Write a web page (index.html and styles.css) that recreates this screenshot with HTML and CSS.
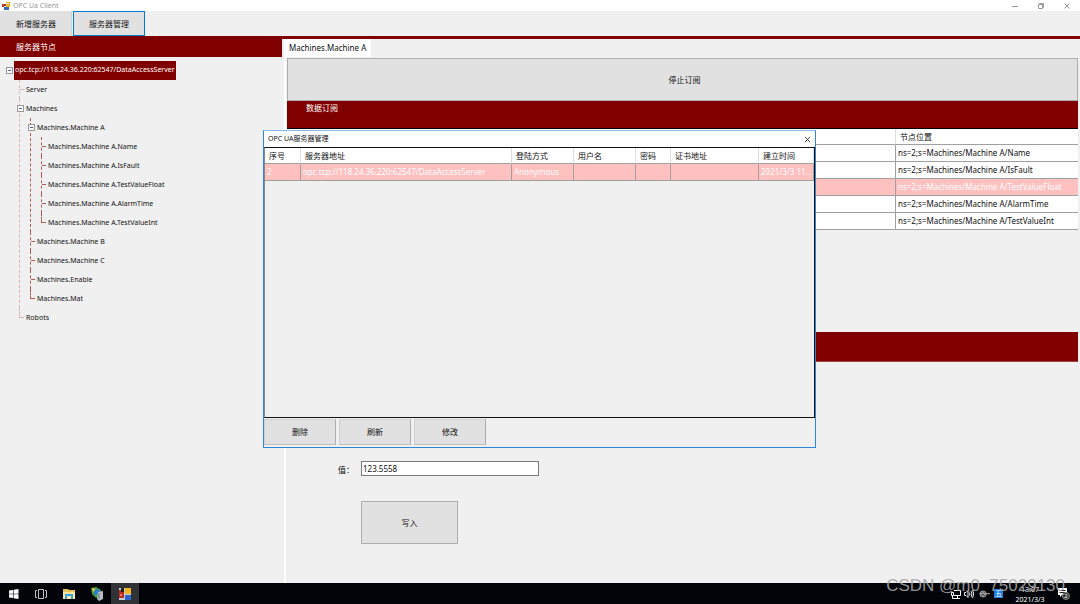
FILE: index.html
```html
<!DOCTYPE html>
<html lang="zh-CN">
<head>
<meta charset="utf-8">
<meta name="viewport" content="width=device-width, initial-scale=1">
<title>OPC Ua Client</title>
<link rel="stylesheet" href="styles.css">
</head>
<body>
<div class="desktop">
  <header class="titlebar">
    <svg class="app-icon" viewBox="0 0 8 8" aria-hidden="true"><path fill="#e9b62c" d="M4 0h4v5H4z"/><path fill="#b33a2a" d="M0 2h4v3H0z"/><path fill="#3b67c4" d="M2 5h5v3H2z"/><path fill="#e8e8e8" d="M4 1h3v1H4zM2 4h2v1H2z"/></svg>
    <span class="titlebar-text">OPC Ua Client</span>
    <div class="window-controls">
      <button class="window-button" type="button" aria-label="最小化"><svg viewBox="0 0 8 8"><path d="M1 4.500h6"/></svg></button>
      <button class="window-button" type="button" aria-label="还原"><svg viewBox="0 0 8 8"><path d="M1.500 2.500h4v4h-4zM2.500 2.500v-1h4v4h-1"/></svg></button>
      <button class="window-button" type="button" aria-label="关闭"><svg viewBox="0 0 8 8"><path d="M1.500 1.500l5 5M6.500 1.500l-5 5"/></svg></button>
    </div>
  </header>

  <nav class="toolbar">
    <button class="button toolbar-button" type="button">新增服务器</button>
    <button class="button toolbar-button focused" type="button">服务器管理</button>
  </nav>

  <div class="workspace">
    <aside class="sidebar">
      <h2 class="sidebar-title">服务器节点</h2>
      <ul class="tree">
        <li class="expandable"><span class="node selected">opc.tcp://118.24.36.220:62547/DataAccessServer</span>
          <ul>
            <li><span class="node">Server</span></li>
            <li class="expandable"><span class="node">Machines</span>
              <ul class="strong-lines">
                <li class="expandable"><span class="node">Machines.Machine A</span>
                  <ul>
                    <li><span class="node">Machines.Machine A.Name</span></li>
                    <li><span class="node">Machines.Machine A.IsFault</span></li>
                    <li><span class="node">Machines.Machine A.TestValueFloat</span></li>
                    <li><span class="node">Machines.Machine A.AlarmTime</span></li>
                    <li><span class="node">Machines.Machine A.TestValueInt</span></li>
                  </ul>
                </li>
                <li><span class="node">Machines.Machine B</span></li>
                <li><span class="node">Machines.Machine C</span></li>
                <li><span class="node">Machines.Enable</span></li>
                <li><span class="node">Machines.Mat</span></li>
              </ul>
            </li>
            <li><span class="node">Robots</span></li>
          </ul>
        </li>
      </ul>
    </aside>

    <main class="content">
      <div class="tabs"><button class="tab" type="button">Machines.Machine A</button></div>
      <div class="panel">
        <button class="button stop-button" type="button">停止订阅</button>
        <h2 class="band">数据订阅</h2>
        <table class="grid nodes">
          <colgroup><col><col class="col-path"></colgroup>
          <thead><tr><th></th><th>节点位置</th></tr></thead>
          <tbody>
            <tr><td></td><td>ns=2;s=Machines/Machine A/Name</td></tr>
            <tr><td></td><td>ns=2;s=Machines/Machine A/IsFault</td></tr>
            <tr class="active"><td></td><td>ns=2;s=Machines/Machine A/TestValueFloat</td></tr>
            <tr><td></td><td>ns=2;s=Machines/Machine A/AlarmTime</td></tr>
            <tr><td></td><td>ns=2;s=Machines/Machine A/TestValueInt</td></tr>
          </tbody>
        </table>
        <div class="band write-band"></div>
        <form class="write-form">
          <label class="write-label" for="value">值：</label>
          <input class="write-input" id="value" type="text" value="123.5558">
          <button class="button write-button" type="button">写入</button>
        </form>
      </div>
    </main>
  </div>

  <footer class="taskbar">
    <div class="tasks">
      <button class="task" type="button" aria-label="开始"><svg viewBox="0 0 14 14"><path fill="#fff" d="M2 3.500l4-.6v3.800H2zM6.600 2.800l4.900-.7v4.600H6.600zM2 7.300h4v3.800l-4-.6zM6.600 7.300h4.900v4.600l-4.900-.7z"/></svg></button>
      <button class="task" type="button" aria-label="任务视图"><svg viewBox="0 0 14 14"><path fill="none" stroke="#c4c4c4" d="M4.500 2.500h5v9h-5zM3 3.500H1.500v7H3M11 3.500h1.500v7H11"/></svg></button>
      <button class="task" type="button" aria-label="文件资源管理器"><svg viewBox="0 0 14 14"><path fill="#e8c05a" d="M1 2h5l1 1h6v9H1z"/><path fill="#fbe49b" d="M1 5h12v7H1z"/><path fill="#35a2dc" d="M3 7h8v5H9V9H5v3H3z"/></svg></button>
      <button class="task" type="button" aria-label="服务器管理器"><svg viewBox="0 0 14 14"><path fill="#3f9c4b" d="M1 1l5-1 5 3-1 6-4 2-4-4z"/><path fill="#edc83c" d="M2 1l4 1-3 3z"/><path fill="#2e7bd0" d="M5 2l5 1-1 4-5 1z"/><path fill="#b8bec4" d="M8 5l5-1v8l-4 2-2-2z"/><path stroke="#69727a" d="M9 6v6"/></svg></button>
      <button class="task running" type="button" aria-label="OPC Ua Client"><svg viewBox="0 0 14 14"><path fill="#c8ced6" d="M1 1h12v12H1z"/><path fill="#b92c24" d="M1 3h5v8H1z"/><path fill="#222" d="M3 1h3v4H3z"/><path fill="#f5b51e" d="M7 1h6v6H7z"/><path fill="#2b67c8" d="M7 8h6v5H7z"/><path fill="#e97a62" d="M2 7h2v2H2z"/></svg></button>
    </div>
    <div class="tray">
      <svg class="tray-icon" viewBox="0 0 10 10" aria-hidden="true"><path fill="none" stroke="#fff" d="M3 1.500h6.500v5H3M6.500 7v2M4 9.500h5M.5 3.500h2v3h-2zM1.500 7v2.500H4"/></svg>
      <svg class="tray-icon" viewBox="0 0 10 10" aria-hidden="true"><path fill="none" stroke="#e8e8e8" d="M.5 3.500H2l2-2v7l-2-2H.5zM5.500 3.500q1 1.500 0 3M7 2q2 3 0 6M8.500 1q2.500 4 0 8"/></svg>
      <svg class="tray-icon" viewBox="0 0 10 10" aria-hidden="true"><circle cx="6" cy="5" r="3.500" fill="#8b8b8b"/><path stroke="#222" d="M4.500 3.500l3 3M7.500 3.500l-3 3"/></svg>
      <span class="ime">五</span>
      <div class="clock"><time>13:07</time><time>2021/3/3</time></div>
      <svg class="notice" viewBox="0 0 13 13" aria-hidden="true"><path fill="#fff" d="M1 1h9v7H5L3 10V8H1z"/><path stroke="#222" d="M2.500 3.500h6M2.500 5.500h6"/><circle cx="9" cy="9" r="3.500" fill="#333" stroke="#888"/><text x="9" y="11" text-anchor="middle">2</text></svg>
    </div>
  </footer>

  <section class="dialog" role="dialog" aria-labelledby="dialog-title">
    <header class="dialog-header">
      <h1 class="dialog-title" id="dialog-title">OPC UA服务器管理</h1>
      <button class="dialog-close" type="button" aria-label="关闭"><svg viewBox="0 0 8 8"><path d="M1 1l6 6M7 1l-6 6"/></svg></button>
    </header>
    <div class="dialog-body">
      <table class="grid servers">
        <colgroup><col class="col-index"><col class="col-address"><col class="col-login"><col class="col-login"><col class="col-password"><col class="col-cert"><col></colgroup>
        <thead><tr><th>序号</th><th>服务器地址</th><th>登陆方式</th><th>用户名</th><th>密码</th><th>证书地址</th><th>建立时间</th></tr></thead>
        <tbody><tr class="active"><td>2</td><td>opc.tcp://118.24.36.220:62547/DataAccessServer</td><td>Anonymous</td><td></td><td></td><td></td><td>2021/3/3 11...</td></tr></tbody>
      </table>
    </div>
    <div class="dialog-actions">
      <button class="button dialog-button" type="button">删除</button>
      <button class="button dialog-button" type="button">刷新</button>
      <button class="button dialog-button" type="button">修改</button>
    </div>
  </section>

  <div class="watermark">CSDN @m0_75029130</div>
</div>
</body>
</html>
```
FILE: styles.css
```css
* {
  box-sizing: border-box;
}

body {
  margin: 0;
  background: #f0f0f0;
  color: #111;
  font: 8px/12px "Noto Sans", "Noto Sans CJK SC", sans-serif;
}

h1,
h2 {
  margin: 0;
  font-size: 8px;
  font-weight: 400;
}

button,
input {
  font: inherit;
  color: inherit;
}

button {
  padding: 0;
  border: 0;
  background: none;
}

ul {
  margin: 0;
  padding: 0;
  list-style: none;
}

svg {
  display: block;
}

.desktop {
  position: relative;
  display: flex;
  flex-direction: column;
  min-height: 100vh;
}

.button {
  border: 1px solid #adadad;
  background: #e1e1e1;
}

/* Main window */
.titlebar {
  display: flex;
  align-items: center;
  height: 11px;
  padding-left: 2px;
  background: #fff;
  color: #999;
  font-size: 7px;
}

.app-icon {
  width: 8px;
  height: 8px;
  margin-right: 3px;
}

.window-controls {
  display: flex;
  margin-left: auto;
}

.window-button {
  display: grid;
  place-items: center;
  width: 26px;
  height: 9px;
}

.window-button svg,
.dialog-close svg {
  width: 8px;
  height: 8px;
  fill: none;
  stroke: #999;
}

.toolbar {
  display: flex;
  height: 28px;
  border-bottom: 3px solid #800000;
}

.toolbar-button {
  width: 72px;
  border-color: #e1e1e1 #d2d2d2 #e1e1e1 #e1e1e1;
}

.toolbar-button.focused {
  margin-left: 1px;
  border-color: #0078d7;
}

.workspace {
  display: flex;
  flex: 1;
}

.sidebar {
  width: 282px;
}

.sidebar-title {
  height: 18px;
  padding-left: 16px;
  background: #800000;
  color: #fff;
  line-height: 16px;
}

/* Node tree */
.tree {
  --line: #d8b4b4;
  padding: 4px 0 0 14px;
  font-size: 7px;
}

.tree ul {
  padding-left: 11px;
}

.tree .strong-lines {
  --line: #b05a5a;
}

.tree li {
  position: relative;
}

.node {
  display: inline-block;
  height: 19px;
  padding: 0 1px;
  line-height: 19px;
  vertical-align: top;
}

.node.selected {
  background: #800000;
  color: #fff;
  line-height: 18px;
}

.tree ul > li::before {
  content: "";
  position: absolute;
  top: 0;
  bottom: 0;
  left: -6px;
  border-left: 1px dashed var(--line);
}

.tree ul > li:last-child::before {
  bottom: auto;
  height: 10px;
}

.tree ul > li::after {
  content: "";
  position: absolute;
  top: 9px;
  left: -5px;
  width: 4px;
  border-top: 1px solid var(--line);
}

.tree li.expandable::after {
  content: "";
  position: absolute;
  top: 6px;
  left: -8px;
  width: 5px;
  height: 5px;
  border: 1px solid #999;
  background: linear-gradient(#4b63a7, #4b63a7) center / 3px 1px no-repeat #fff;
}

/* Tab content */
.content {
  flex: 1;
  min-width: 0;
  margin-left: 2px;
  display: flex;
  flex-direction: column;
}

.tabs {
  display: flex;
  height: 18px;
}

.tab {
  padding: 0 5px;
  background: #fff;
  white-space: nowrap;
}

.panel {
  flex: 1;
  padding: 1px 2px 0 1px;
  border-left: 2px solid #fff;
}

.stop-button {
  display: block;
  width: 100%;
  height: 43px;
  padding-left: 4px;
}

.band {
  height: 27px;
  padding-left: 19px;
  background: #800000;
  color: #fff;
  line-height: 13px;
}

.grid {
  width: 100%;
  border-spacing: 0;
  table-layout: fixed;
  background: #fff;
}

.grid th,
.grid td {
  padding: 0 2px;
  border-right: 1px solid #a0a0a0;
  border-bottom: 1px solid #a0a0a0;
  font-weight: 400;
  line-height: 16px;
  text-align: left;
  white-space: nowrap;
  overflow: hidden;
}

.grid th {
  padding-left: 4px;
  border-right-color: #ddd;
  line-height: 15px;
}

.grid td {
  height: 17px;
}

.grid .active td {
  background: #ffc0c0;
  color: #fff;
}

.nodes {
  border-top: 1px solid #000;
}

.nodes th:last-child,
.nodes td:last-child {
  border-right: 0;
}

.col-path {
  width: 182px;
}

.write-band {
  height: 30px;
  margin-top: 102px;
  border-bottom: 1px solid #a04040;
}

.write-form {
  display: grid;
  grid-template-columns: 74px 178px;
  row-gap: 25px;
  padding-top: 99px;
}

.write-label {
  padding: 3px 7px 0 0;
  text-align: right;
}

.write-input {
  width: 100%;
  height: 15px;
  padding: 0 1px;
  border: 1px solid #7a7a7a;
  background: #fff;
}

.write-button {
  grid-column: 2;
  width: 97px;
  height: 43px;
}

/* Taskbar */
.taskbar {
  display: flex;
  justify-content: space-between;
  height: 21px;
  background: #020409;
  color: #fff;
}

.tasks {
  display: flex;
}

.task {
  display: grid;
  place-items: center;
  width: 27px;
}

.task + .task {
  width: 28px;
}

.task svg {
  width: 14px;
  height: 14px;
}

.task.running {
  background: #303236;
}

.tray {
  display: flex;
  align-items: center;
  gap: 3px;
  padding-right: 10px;
}

.tray-icon {
  width: 10px;
  height: 10px;
}

.ime {
  width: 9px;
  margin-left: 4px;
  background: #1c7fe0;
  font-size: 7px;
  line-height: 9px;
  text-align: center;
}

.clock {
  display: flex;
  flex-direction: column;
  align-items: center;
  width: 48px;
  padding-top: 2px;
  font-size: 7px;
  line-height: 10px;
}

.notice {
  width: 13px;
  height: 13px;
}

.notice text {
  fill: #fff;
  font-size: 6px;
}

/* Server dialog floats over the main window */
.dialog {
  position: absolute;
  top: 130px;
  left: 263px;
  width: 553px;
  border: 1px solid #2f86d6;
  border-top-color: #8abdf0;
  background: #f0f0f0;
}

.dialog-header {
  display: flex;
  align-items: center;
  justify-content: space-between;
  height: 16px;
  padding: 0 4px;
  background: #fff;
}

.dialog-title {
  font-size: 7px;
}

.dialog-close svg {
  width: 7px;
  height: 7px;
  stroke: #333;
}

.dialog-body {
  height: 271px;
  border: 1px solid #111;
  border-left-color: #888;
}

.col-index {
  width: 36px;
}

.col-address {
  width: 211px;
}

.col-login {
  width: 62px;
}

.col-password {
  width: 35px;
}

.col-cert {
  width: 88px;
}

.dialog-actions {
  display: flex;
  gap: 3px;
  padding: 1px 0 2px;
}

.dialog-button {
  width: 72px;
  height: 26px;
  border-color: #d0d0d0 #adadad #c0c0c0 #d0d0d0;
}

/* Overlay credit across the taskbar edge */
.watermark {
  position: absolute;
  right: 15px;
  bottom: 8px;
  color: rgba(165, 165, 165, 0.9);
  font: 17px/20px "Liberation Sans", sans-serif;
}
```
